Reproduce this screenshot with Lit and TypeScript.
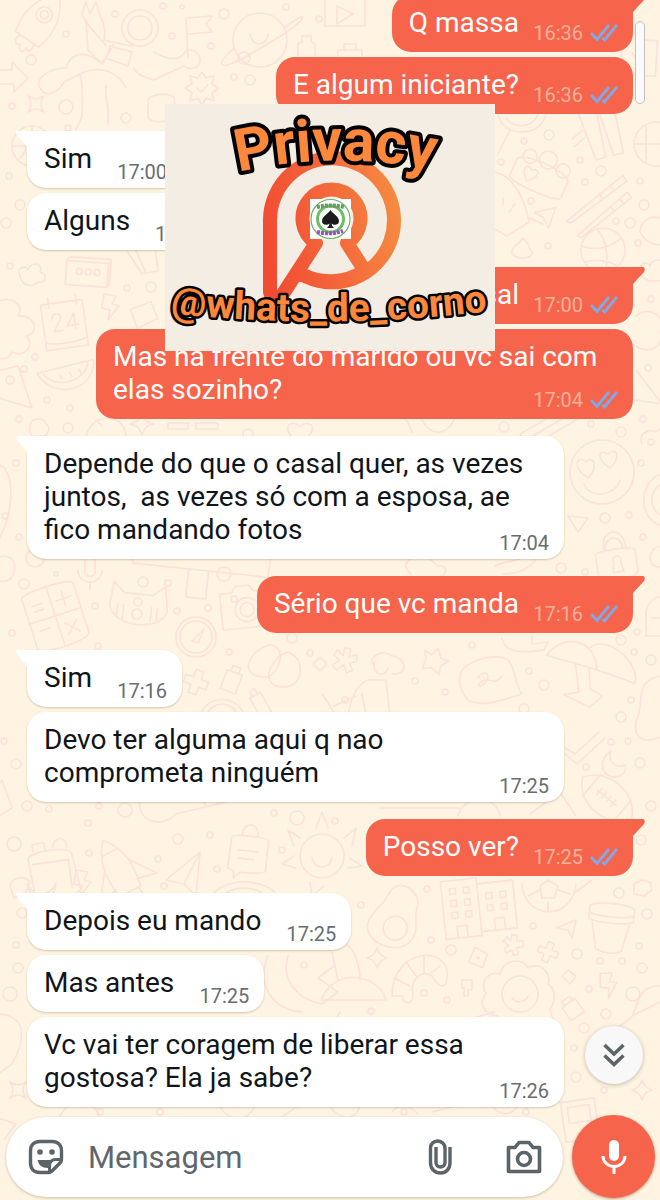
import { LitElement, html, svg, css } from "lit";
import { customElement, property } from "lit/decorators.js";

interface Message {
  text: string;
  time: string;
  mine?: boolean;
  first?: boolean;
}

const MESSAGES: Message[] = [
  { text: "Q massa", time: "16:36", mine: true, first: true },
  { text: "E algum iniciante?", time: "16:36", mine: true },
  { text: "Sim", time: "17:00", first: true },
  { text: "Alguns", time: "17:00" },
  { text: "Casal", time: "17:00", mine: true, first: true },
  { text: "Mas na frente do marido ou vc sai com elas sozinho?", time: "17:04", mine: true },
  {
    text: "Depende do que o casal quer, as vezes juntos,  as vezes só com a esposa, ae fico mandando fotos",
    time: "17:04",
    first: true,
  },
  { text: "Sério que vc manda", time: "17:16", mine: true, first: true },
  { text: "Sim", time: "17:16", first: true },
  { text: "Devo ter alguma aqui q nao comprometa ninguém", time: "17:25" },
  { text: "Posso ver?", time: "17:25", mine: true, first: true },
  { text: "Depois eu mando", time: "17:25", first: true },
  { text: "Mas antes", time: "17:25" },
  { text: "Vc vai ter coragem de liberar essa gostosa? Ela ja sabe?", time: "17:26" },
];

/* Line drawings scattered over the wallpaper: [x, y, rotation, path data]. */
const DOODLES: [number, number, number, string][] = [
  // rocket
  [42, 18, 35, "M-14 26C-20 4-16-14 0-30C16-14 20 4 14 26ZM-8-4a8 8 0 1 0 16 0a8 8 0 1 0-16 0M-4-4a4 4 0 1 0 8 0a4 4 0 1 0-8 0M-8 26C-12 34-6 38-3 34C0 42 5 40 4 33C9 37 11 32 8 26"],
  // astronaut
  [140, 28, 0, "M-18 0a18 18 0 1 0 36 0a18 18 0 1 0-36 0M-12 0a12 12 0 1 0 24 0a12 12 0 1 0-24 0M-34 18C-42 6-56-4-58-14L-54-26L-50-14L-44-26L-40-12C-36-6-34 2-36 12L-8 18M-54-8L-52 22L-38 36L-26 16M-30 18L-8 24L-12 38L-34 30ZM14 24C24 30 34 34 42 28C46 18 60 22 60 32C60 42 48 42 44 38L14 52C6 50-4 46-6 40M-38 36C-56 20-70 26-74 40C-92 40-106 52-100 60C-94 72-80 62-76 54L-60 46C-56 60-58 76-58 88L-64 102M-60 46C-40 36-22 44-14 60M-32 96C-30 76-36 70-34 58"],
  // flag
  [190, 38, 0, "M-2 20L-4-20L22-22L16-14L22-6L-3-4"],
  // planet
  [260, 40, 0, "M-27 0a27 27 0 1 0 54 0a27 27 0 1 0-54 0M-10-6C-8 8 8 6 8-6M24-12C50-32 48-22 24-6L-16 18C-44 32-44 24-26 8M-22 18a6 6 0 1 0 12 0a6 6 0 1 0-12 0"],
  // bottle
  [306, 48, 0, "M-8 14V-4L-4-6V-12H5V-6L9-4V14Z"],
  // seal
  [202, 88, 0, "M0-16L4-10L12-12L10-4L17 0L10 5L12 13L4 10L0 17L-4 10L-12 13L-10 5L-17 0L-10-4L-12-12L-4-10ZM-5 0L-1 4L6-3"],
  // arrow
  [10, 78, 0, "M-20-8H2V-16L18 0L4 14V6H-20"],
  [36, 104, 0, "M-8-8C-2-4 2-4 8-8C4-2 4 2 8 8C2 4-2 4-8 8C-4 2-4-2-8-8Z"],
  [162, 108, 0, "M-14-8C-12-14 8-16 12-10L14 8C10 14-8 16-14 10Z"],
  [32, 146, 0, "M-20 0a20 20 0 1 0 40 0a20 20 0 1 0-40 0M-20 0H20M0-20V20M-14-14C-4-6-4 6-14 14M14-14C4-6 4 6 14 14"],
  [345, 16, 0, "M-20-30V10H20V-30M-8-10L8-2L-8 8Z"],
  [350, 58, 0, "M-12-8H12V10H-12ZM-6-8V-14H6V-8"],
  [640, 60, 20, "M-24-14L10-24L20 10L-14 20ZM-10-4L6 6"],
  // left column
  [32, 276, 0, "M-12 0C-16-8-6-12-4-6C0-16 12-12 8-4C16-2 14 8 6 6C0 12-10 10-12 0Z"],
  [88, 274, 4, "M-22-12L-20-16H22V8L20 12H-22ZM-22-12H20V12M-12-2a3 3 0 1 0 6 0a3 3 0 1 0-6 0M-3-2a3 3 0 1 0 6 0a3 3 0 1 0-6 0M6-2a3 3 0 1 0 6 0a3 3 0 1 0-6 0"],
  [65, 322, -8, "M-22-20H20V18C8 22-14 22-22 18ZM-22 18V26H20V18M-14-26V-16M14-26V-16M-13-4C-11-12-3-10-4-4L-12 8H-3M10 8V-8L2 4H13"],
  [110, 306, 0, "M-6-12L6-10L2-2L9 0L-2 14L0 4L-8 2Z"],
  [144, 314, -15, "M-12-8L10-10L12 8L-10 12Z"],
  [140, 262, -10, "M-14-20L0 12H16L18-20M-4-20L4 12"],
  [14, 340, 0, "M-20-36C-4-48 12-34 4-24C22-26 26-6 12-4C22 6 10 18-2 12C-6 22-20 20-22 12"],
  [68, 374, -14, "M-30-8H28C24 22-20 24-30-8ZM-24-6C-16 12 14 12 22-6M-8-1L-7 3M2-1L3 3M12-2L13 2"],
  [14, 388, 0, "M-22-16L4-22L18 20L-22 8M-8-8a4 4 0 1 0 8 0a4 4 0 1 0-8 0"],
  [40, 430, 0, "M-10-4C-10-12 4-14 6-6C12-4 8 8 0 6C-6 10-12 4-10-4Z"],
  [142, 424, 0, "M-12 0C-4-2-2-4 0-12C2-4 4-2 12 0C4 2 2 4 0 12C-2 4-4 2-12 0Z"],
  [192, 426, 0, "M-24-3H-4V3H-24ZM4-3H26V3H4Z"],
  [300, 430, 0, "M0 14C-20 0-12-12 0-4C12-12 20 0 0 14Z"],
  [4, 500, 0, "M-6-36C14-30 8 20-6 40"],
  [10, 570, 0, "M-16-10C-8-18 8-14 4 2C2 12-8 14-16 8"],
  // calculator
  [55, 618, -18, "M-26-28C-26-34 26-34 28-28V24C26 32-24 32-26 24ZM-27-2H28M1-33V30M-18-18H-8M-18-12H-8M14-24V-8M6-16H22M8 8L20 20M20 8L8 20M-18 8H-8"],
  [90, 570, 0, "M-5-10C-5-16 5-16 5-10V2C5 8-5 8-5 2ZM-12 0C-12 16 12 16 12 0M0 12V20"],
  // cat
  [137, 612, 6, "M-28-4L-26-28L-14-18H14L26-28L30-4C26 18-22 18-28-4ZM-20-6V6M-14-6V8M14-6V8M20-6V6M-4-10a4 4 0 1 0 8 0a4 4 0 1 0-8 0M-5 2a5 5 0 1 0 10 0a5 5 0 1 0-10 0"],
  [196, 637, 0, "M-20 0a20 20 0 1 0 40 0a20 20 0 1 0-40 0M-16 0a16 16 0 1 0 32 0a16 16 0 1 0-32 0M-4 4L8-8L2 6Z"],
  [243, 608, -6, "M-22-16H-10L-6-22H8L12-16H28V20H-22ZM-8 2a12 12 0 1 0 24 0a12 12 0 1 0-24 0M-3 2a7 7 0 1 0 14 0a7 7 0 1 0-14 0"],
  [198, 576, 6, "M-70-26L-66-6H10V22H-10V-6M10-6H70V-26"],
  [275, 665, 12, "M-26 4C-24-12-8-22-4-18C8-16 6 12-8 14C-20 16-26 12-26 4ZM-4 4C0-10 10-18 14-14C26-12 32 10 18 18C4 24-6 18-4 4Z"],
  [196, 682, 20, "M-4-12H4V-4H12V4H4V12H-4V4H-12V-4H-4Z"],
  [232, 680, 20, "M-8-8H8V12H-8ZM-4-8V-14H4V-8"],
  [260, 704, -30, "M-6-10H6V14H-6ZM-3-10V-16H3V-10"],
  [320, 664, 0, "M-7 0L0-7L7 0L0 7Z"],
  [222, 712, 0, "M-22 4C-16-18 16-18 22 4M-16 4C-10-12 10-12 16 4"],
  // bag, rocket, plane, chat lock, sun
  [52, 872, -8, "M-22-16C-20-24 20-24 22-16L26 20C24 30-18 30-20 20ZM-18-10H18V18M-16-22V-30H-4V-22M4-24C6-36 20-34 18-22M-26 8C-22 24-4 24 2 12C0 30-26 30-26 8Z"],
  [120, 872, -28, "M-12 22C-16-4-14-20 0-36C14-20 16-4 12 22ZM-9-22H9M13-8L32 18L12 14M-13-8L-32 18L-12 14M-9 22L-12 38L-4 32L0 42L4 32L12 38L9 22"],
  [188, 878, 0, "M-22 2L12-26L8 18L-4 6ZM-4 6L12-26"],
  [248, 855, 6, "M-18-16C-18-20 18-20 19-16V14C18 18-6 18-6 18L-12 24L-13 17L-19 15ZM-10-4H10M-10 4H6M-8-19C-8-34 8-34 8-19"],
  [322, 856, 0, "M-22 0a22 22 0 1 0 44 0a22 22 0 1 0-44 0M-10 2C-8 14 8 14 10 2M-6-28L0-44L6-28M-22-18L-34-26L-28-10M-28 0L-40 8L-26 12M22-18L34-28L30-10M28 2L40 10L26 12M-12 26L-10 40L2 30"],
  [160, 806, 0, "M-20-6C-24 14 0 24 16 8L90-10V-18M40-16L46 2"],
  [82, 882, 0, "M-6-12L6-10L2-2L9 0L-2 14L0 4L-8 2Z"],
  [6, 806, 0, "M-14-10L-4-26L6 2L-14 14"],
  [22, 886, 0, "M-12 0C-10-10 4-10 8-4L4 6L-8 12Z"],
  [244, 896, 0, "M-34 4C-26-20 26-20 36 4M-24 4C-16-12 16-12 24 4"],
  [308, 984, 0, "M-40-28C-52 0-36 26-6 28M-20-28C-26-8-16 14 14 20L30 8L10-6L26-18"],
  [8, 1040, 0, "M-10-26C26-24 12 10 4 24L-10 34"],
  [18, 1090, 0, "M-8-8C-2-4 2-4 8-8C4-2 4 2 8 8C2 4-2 4-8 8C-4 2-4-2-8-8Z"],
  // right column
  [520, 118, 0, "M-22-4C-18 20 22 20 26-4M-14 0C-8 10 12 12 18-4M-10 12L-22 36"],
  [600, 134, -14, "M-16-24L-10 24H0L2-24M4-24L8 24H18L20-24M-28-2L-16-8M-28 6L-16 0"],
  [656, 144, 0, "M-22 0a22 22 0 1 0 44 0a22 22 0 1 0-44 0M-10-18V18M-22 0H22"],
  [540, 176, 24, "M-28-6C-26-16 24-16 28-6V12C24 18-24 18-28 12ZM-24-14a7 7 0 1 0 14 0a7 7 0 1 0-14 0M-8-18a9 9 0 1 0 18 0a9 9 0 1 0-18 0M12-14a7 7 0 1 0 14 0a7 7 0 1 0-14 0M-10 10C-22 0-16-8-10-2C-4-8 2 0-10 10Z"],
  [600, 202, -36, "M-38-4L34-8V-1L-36 0ZM-38 14L28 8V15L-36 18ZM4-7V-1M18-7V-1M6 10V16M18 9V15"],
  [505, 208, 0, "M-14-36C8-36 20-8 24 14L2 28L-12 20M24 10L38 16M4 4L10-4M-2-10V-4"],
  [545, 214, 20, "M-10 2L8-10V12L0 4Z"],
  [522, 250, 0, "M-10 2C-10-6-2-4 0-12C8-8 6-2 10 2C12 10-10 10-10 2Z"],
  [603, 250, 0, "M-22 0a22 22 0 1 0 44 0a22 22 0 1 0-44 0M-21-4C-6 2 10-4 18-12M-6-21C4-10 6 8 2 22M-18 12C-6 8 8 12 14 16"],
  [656, 232, 0, "M-16 0C-16-14 0-18 10-12M-16 0C-10 12 0 14 10 12"],
  [654, 272, 0, "M-14 0C-16-8-6-12-4-6C0-16 12-12 12-4M-14 0C-12 10 0 10 8 8"],
  [642, 336, 0, "M-6-20C8-32 26-18 18-4C24 8 8 20-6 10"],
  [642, 394, 0, "M-6-24L20 10L-6 6"],
  [550, 426, -30, "M-30-8H34V8H-30ZM-30 0H34"],
  [440, 424, 0, "M-20-10C-14 14 10 14 16-10M-60-6C-50-16-34-12-28 8"],
  [602, 472, 0, "M-32 0a32 32 0 1 0 64 0a32 32 0 1 0-64 0M-18 12C-12 28 14 24 18 8M-14 6C-32-6-24-18-16-10C-10-18-2-6-14 6ZM8-4C-8-14-2-24 6-18C14-26 20-14 8-4Z"],
  [655, 500, 0, "M14-28C-20-24-18 24 10 26M14-18C-8-16-8 14 10 16"],
  [652, 440, 0, "M-10 4C-14-6-4-12 4-8L14-16M-4 2a3 3 0 1 0 6 0a3 3 0 1 0-6 0"],
  [576, 522, 0, "M-8-6L12-4L2 10Z"],
  [617, 564, -8, "M-20-12C-18-16 18-16 20-12V10C16 18-18 18-20 10ZM-11-15C-13-38 12-38 11-15M-10-15C-9-30 8-30 8-15M-3-2a4 4 0 1 1 7 0L6 8H-5Z"],
  [656, 556, 0, "M4-10C-12-6-6 16 6 10"],
  [656, 616, 0, "M-10-4C-8-18 4-20 10-20M-10-4V20H10M-4 2H10"],
  [425, 566, 0, "M-20 0C-14-16 8-8 12 0C24-2 24 10 10 12H-12ZM70 0C80-6 100-4 110-16M78 8C90 8 104 4 112-8"],
  [372, 672, 0, "M0-8C-2-18 12-22 20-16C36-14 36 4 20 2M2-10C0 4 14 6 16-4M-4 8C-16 12-22 30-24 44M-4 8H14L18 44M-10 22L-6 44M-50 22L-38 40M-16 24L-38 34"],
  [345, 660, 15, "M-3-12H3V-4L10-8L12-2L5 2L10 8L5 12L0 5L-6 12L-11 8L-5 2L-12-2L-10-8L-3-4Z"],
  [434, 660, 20, "M-12-6L-4-4L0-12L6-4L14-4L8 4L10 12L0 8L-8 12L-8 2Z"],
  [488, 680, 0, "M-28-4C-26-20 10-28 20-20C28-12 26 4 34 14C14 20-6 28-20 20C-26 14-30 4-28-4ZM-10-2C-6-10 4-8-2 2C-10 10-12 4-4 0C4-2 6 6 14-4"],
  [528, 640, 0, "M-26-2C-22 16 0 12 16 10L20 2L4 4V-4"],
  [590, 664, 14, "M-44 2C-34-24 0-26 8 4ZM-4-16C10-34 50-12 48 8L8 4M-14 4L-4 30L-18 36L10 42L20 28L6 24L0 4"],
  [652, 716, 0, "M10-40C-20-36-6-14-16 6C-20 28 0 26 10 20"],
  [585, 756, 0, "M-20-8L-10-2L14-24M-20-2L-8 8L20-18"],
  [613, 763, 0, "M-2-12C-16-4-12 16 4 14C10 12 14 8 12 2C2 6-6-2-2-12Z"],
  [607, 798, 40, "M-32 0C-20-24 20-24 32 0C20 24-20 24-32 0ZM-12 0H12M-10-4V4M-4-4V4M2-4V4M8-4V4M-20-14V14M20-14V14"],
  [480, 806, 0, "M-22 10C-16-12 16-12 20 10M50 8L80-14L96 10M-100 2H-20"],
  [477, 906, -6, "M-34-28H2V30H-34ZM2-22H38V26H2ZM-26-20H-20V-14H-26ZM-12-20H-6V-14H-12ZM-26-8H-20V-2H-26ZM-12-8H-6V-2H-12ZM-26 4H-20V10H-26ZM-12 4H-6V10H-12ZM-22 30V18H-12V30M10-12H16V-6H10ZM24-12H30V-6H24ZM10 0H16V6H10ZM24 0H30V6H24ZM16 26V14H26V26"],
  [548, 888, 0, "M-26-4C-24 32 24 34 28-4M-8-2L0-8L10-2L6 10H-6ZM-8 2L-20 8M10 2L22 6M0 14V24M28 4L44-8"],
  [395, 918, 10, "M-8-28C0-40 22-30 20-14C18 0 28 8 18 22C6 36-26 30-26 10C-24-2-18-6-14-14ZM-10 10a12 12 0 1 0 24 0a12 12 0 1 0-24 0"],
  [610, 926, 6, "M-22-18C-20-24 20-24 23-18V-6C18-2-18-2-22-6ZM-18-2L-12 24C-4 28 8 28 14 24L19-2M-22-12C-14-8 14-8 23-12"],
  [642, 888, 0, "M-8-4L0-8L8-6L10 2L2 8L-8 6Z"],
  [566, 928, 0, "M-10 0L10-8L6 10L2 2Z"],
  [513, 945, 10, "M-3-10H3V-4L9-6L10 0L4 2L7 8L2 10L0 5L-5 9L-8 5L-4 1L-10-2L-7-7L-3-4Z"],
  [548, 952, 20, "M-3-10H3V-3H10V3H3V10H-3V3H-10V-3H-3Z"],
  [478, 958, 30, "M-8-8H6L9 6L-6 8ZM-1 0a1 1 0 1 0 2 0a1 1 0 1 0-2 0"],
  [377, 958, 0, "M-10 0C-4-2-2-4 0-10C2-4 4-2 10 0C4 2 2 4 0 10C-2 4-4 2-10 0Z"],
  [418, 984, 0, "M-26 12C-26-40 40-40 28 0C22 6 16-4 14-8C6-14-4-8-6 4C-2 22-14 22-16 12ZM-24-6L-8 2M-12-22L-2-8M6-28V-12M22-18L12-10"],
  [520, 992, 0, "M-22 24C-40 22-40 8-34 2C-42-12-28-22-20-18C-16-34 4-34 8-24C22-32 32-16 28-8C40 0 32 14 30 18L34 30M-18 2a18 18 0 1 0 36 0a18 18 0 1 0-36 0M-8 6C-4 12 6 10 8 4M-60 30L-26 20"],
  [352, 988, 0, "M-30 12C-22-18 24-18 34 12ZM-14-8L-20-36M8-8C8-22 2-40-6-44M-12 24L-18 34"],
  [568, 976, 0, "M-6 0L0-6L8 0L2 8Z"],
  [608, 984, -10, "M-6-12L6-10L2-2L9 0L-2 14L0 4L-8 2Z"],
  [572, 1008, -35, "M-8-6H8V10H-8ZM-5-6V-11H5V-6"],
  [466, 986, 0, "M-4-6H6V4H2V10H-2V2H-4Z"],
  [640, 1010, 0, "M20-24C-4-24 0-6-8 6C-16 16-28 20-36 20M-8 6L20-8"],
  [642, 1090, 0, "M-10 0C-4-2-2-4 0-10C2-4 4-2 10 0C4 2 2 4 0 10C-2 4-4 2-10 0Z"],
  [580, 1112, -8, "M-18-12H16V28H-18ZM-12-6H10V10H-12Z"],
  [452, 1108, 0, "M-20 4L10-4M-60 4C-50-8-40 0-34 6M40-2C50 10 60 6 66-2"],
  [240, 1110, 0, "M-22-8C-14 14 10 14 16-8M40 8L70-12M90-4C100 12 116 10 120-4M-180 6C-170-12-150-12-140 6"],
  [8, 1126, 0, "M-10-8L8-2L-4 14"],
  [120, 424, 0, "M-34 22C-38-10 4-16 6 12M-24-4L-18 2"],
];

const DOTS: [number, number, number][] = [
  [66, 34, 3], [115, 14, 3], [163, 6, 3], [182, 7, 2], [172, 36, 3], [211, 46, 3], [224, 14, 5], [286, 7, 3],
  [31, 60, 5], [12, 106, 3], [66, 107, 7], [126, 118, 5], [68, 128, 3], [234, 77, 3], [250, 80, 5], [319, 19, 3],
  [20, 205, 5], [6, 223, 5], [9, 176, 3], [10, 266, 3], [127, 288, 3], [151, 287, 5], [35, 357, 3], [24, 369, 3],
  [47, 400, 3], [70, 408, 3], [68, 428, 5], [19, 419, 3], [248, 434, 5], [16, 463, 3], [5, 516, 3], [19, 537, 3],
  [35, 558, 9], [24, 584, 5], [56, 574, 2], [143, 582, 5], [168, 583, 3], [224, 574, 7], [95, 606, 3], [177, 611, 3],
  [208, 608, 3], [234, 599, 3], [12, 633, 3], [98, 646, 3], [229, 652, 3], [292, 638, 5], [310, 653, 3], [16, 764, 5],
  [4, 741, 3], [27, 806, 5], [49, 809, 3], [99, 806, 3], [125, 810, 7], [14, 844, 7], [89, 853, 3], [88, 823, 3],
  [178, 839, 5], [210, 835, 3], [158, 859, 3], [217, 869, 3], [274, 813, 3], [297, 818, 7], [282, 850, 3], [164, 886, 3],
  [16, 945, 3], [18, 968, 5], [10, 994, 7], [22, 913, 5], [304, 965, 3], [518, 90, 3], [549, 135, 5], [524, 141, 3],
  [501, 162, 3], [580, 160, 3], [601, 171, 5], [585, 182, 3], [640, 181, 3], [644, 205, 5], [616, 221, 3], [630, 223, 5],
  [638, 243, 3], [531, 201, 3], [548, 246, 3], [651, 299, 3], [648, 368, 3], [621, 432, 5], [643, 419, 3], [504, 427, 5],
  [591, 424, 3], [641, 463, 3], [605, 518, 5], [629, 515, 3], [643, 537, 3], [561, 568, 5], [585, 572, 3], [621, 640, 5],
  [637, 632, 3], [634, 652, 3], [651, 660, 5], [472, 645, 3], [415, 681, 3], [445, 692, 3], [529, 671, 3], [544, 685, 5],
  [524, 709, 5], [631, 700, 3], [621, 717, 5], [611, 742, 3], [628, 741, 3], [640, 763, 5], [586, 767, 3], [651, 806, 5],
  [641, 840, 5], [335, 821, 3], [427, 889, 3], [361, 905, 3], [619, 893, 5], [533, 926, 3], [647, 914, 5], [431, 940, 3],
  [451, 950, 5], [577, 954, 5], [600, 961, 3], [622, 961, 3], [639, 946, 3], [642, 968, 5], [589, 989, 3], [633, 994, 7],
  [447, 1000, 3], [424, 993, 3], [371, 1011, 3], [606, 1014, 5], [584, 1028, 5], [574, 1048, 3], [576, 1077, 5], [604, 1090, 3],
  [526, 1112, 3], [404, 1112, 3], [160, 1112, 3], [286, 446, 3], [345, 700, 3], [100, 1112, 3],
];

@customElement("chat-wallpaper")
class ChatWallpaper extends LitElement {
  static styles = css`
    :host {
      display: block;
      background: #fef4e1;
    }
    svg {
      display: block;
      width: 100%;
      height: 100%;
      fill: none;
      stroke: #fbe1d9;
      stroke-width: 1.6;
      stroke-linecap: round;
      stroke-linejoin: round;
    }
  `;

  render() {
    return html`<svg viewBox="0 0 660 1200" preserveAspectRatio="xMidYMid slice" aria-hidden="true">
      ${DOODLES.map(([x, y, r, d]) => svg`<path d=${d} transform="translate(${x} ${y}) rotate(${r})" />`)}
      ${DOTS.map(([x, y, r]) => svg`<circle cx=${x} cy=${y} r=${r} />`)}
    </svg>`;
  }
}

@customElement("chat-bubble")
class ChatBubble extends LitElement {
  @property({ attribute: false }) message!: Message;

  static styles = css`
    :host {
      display: flex;
    }
    .bubble {
      position: relative;
      display: grid;
      box-sizing: border-box;
      max-width: calc(100% - 69px);
      padding: 11px 15px 5px 17px;
      border-radius: 19px;
      background: #fff;
      color: #10151a;
      box-shadow: 0 1px 2px rgba(120, 90, 60, 0.3);
    }
    .mine {
      margin-left: auto;
      background: #f6644b;
      color: #fff;
      box-shadow: 0 0 2px #fff;
    }
    .first {
      border-top-left-radius: 0;
    }
    .mine.first {
      border-top-left-radius: 19px;
      border-top-right-radius: 0;
    }
    .text {
      grid-area: 1 / 1;
      margin: 0;
      padding: 0 16px 8px 0;
      font-size: 28px;
      line-height: 33px;
      white-space: pre-wrap;
    }
    .room {
      display: inline-block;
      width: 59px;
      height: 1px;
    }
    .mine .room {
      width: 83px;
    }
    .meta {
      grid-area: 1 / 1;
      place-self: end;
      display: flex;
      align-items: center;
      gap: 7px;
      height: 22px;
      color: #686d72;
      font-size: 20px;
      line-height: 22px;
    }
    .mine .meta {
      margin-bottom: 3px;
      color: #fcb09c;
    }
    .ticks {
      width: 28px;
      height: 18px;
      fill: none;
      stroke: #81a9e8;
      stroke-width: 2.8;
    }
    .tail {
      position: absolute;
      top: 0;
      left: -12px;
      width: 13px;
      height: 18px;
      fill: #fff;
    }
    .mine .tail {
      left: auto;
      right: -12px;
      fill: #f6644b;
    }
  `;

  render() {
    const { text, time, mine, first } = this.message;
    return html`<div class="bubble ${mine ? "mine" : ""} ${first ? "first" : ""}">
      ${first
        ? html`<svg class="tail" viewBox="0 0 13 18" aria-hidden="true">
            ${mine
              ? svg`<path d="M0 0H11Q14 1 12 5L1 17V18H0Z" />`
              : svg`<path d="M13 0H1Q0 0 1 2Q3 6 8 11Q12 15 12 18H13Z" />`}
          </svg>`
        : null}
      <p class="text">${text}<span class="room"></span></p>
      <span class="meta"
        ><time>${time}</time>${mine
          ? html`<svg class="ticks" viewBox="0 0 28 18" role="img" aria-label="Lida">
              <path d="M1 9L7 15.500L19 1M12.500 14L14.500 16L27 1" />
            </svg>`
          : null}</span
      >
    </div>`;
  }
}

@customElement("creator-badge")
class CreatorBadge extends LitElement {
  static styles = css`
    :host {
      display: block;
    }
    svg {
      display: block;
      width: 100%;
      background: #f4ede3;
      font-family: Roboto, sans-serif;
      font-weight: 700;
    }
    .outlined {
      fill: #fd873b;
      stroke: #000;
      stroke-linejoin: round;
      paint-order: stroke;
    }
    .title {
      font-size: 59px;
      stroke-width: 8px;
    }
    .handle {
      font-size: 39px;
      stroke-width: 5px;
    }
  `;

  render() {
    return html`<svg viewBox="0 0 330 247">
      <defs>
        <linearGradient id="flame" gradientUnits="userSpaceOnUse" x1="98" y1="130" x2="236" y2="105">
          <stop offset="0" stop-color="#f14b34" />
          <stop offset="0.5" stop-color="#f4683a" />
          <stop offset="1" stop-color="#f58b41" />
        </linearGradient>
        <path id="arch" d="M66 70Q169 44 276 68" />
        <path id="smile" d="M2 209Q165 227 326 207" />
      </defs>
      <g fill="none" stroke="url(#flame)" stroke-width="14" stroke-linecap="round" stroke-linejoin="round">
        <path d="M136 170A62 62 0 1 0 105 116V188Q106 195 116 193L151 139A29 29 0 1 1 182 139L198 164M136 170A62 62 0 0 0 198 168" />
      </g>
      <g>
        <rect x="145" y="95" width="41" height="40" fill="#fff" />
        <circle cx="165.500" cy="115" r="19.500" fill="#fff" stroke="#62b565" stroke-width="1.200" />
        <circle cx="165.500" cy="115" r="13" fill="#fff" stroke="#6dbd62" stroke-width="3" />
        <path
          fill="#1b1b1d"
          d="M165.500 106C168 110 174 112.500 174 117C174 121 169 122 166.500 119.500Q167 123 169 124H162Q164 123 164.500 119.500C162 122 157 121 157 117C157 112.500 163 110 165.500 106Z"
        />
        <path fill="none" stroke="#6b9368" stroke-width="4" stroke-dasharray="3 1" d="M152 103Q165 100 180 103" />
        <path fill="none" stroke="#a04bd0" stroke-width="4" stroke-dasharray="3 1" d="M152 128Q165 131 178 127" />
      </g>
      <text class="outlined title" text-anchor="middle"><textPath href="#arch" startOffset="50%">Privacy</textPath></text>
      <text class="outlined handle" text-anchor="middle"
        ><textPath href="#smile" startOffset="50%">@whats_de_corno</textPath></text
      >
    </svg>`;
  }
}

@customElement("app-root")
class AppRoot extends LitElement {
  static styles = css`
    :host {
      position: relative;
      display: flex;
      flex-direction: column;
      height: 100vh;
      overflow: hidden;
      font-family: Roboto, sans-serif;
    }
    .wallpaper {
      position: absolute;
      inset: 0;
    }
    .history {
      position: relative;
      flex: 1;
      min-height: 0;
      display: flex;
      flex-direction: column;
      justify-content: flex-end;
      gap: 5px;
      padding: 0 27px 8px;
      overflow: hidden;
    }
    .turn {
      margin-top: 12px;
    }
    .badge {
      position: absolute;
      top: 104px;
      left: 25%;
      width: 50%;
    }
    .scrollbar {
      position: absolute;
      top: 21px;
      right: 15px;
      box-sizing: border-box;
      width: 10px;
      height: 83px;
      border: 1px solid #c4bfc0;
      border-radius: 5px;
      background: #fbfafc;
    }
    button {
      display: grid;
      place-items: center;
      margin: 0;
      padding: 0;
      border: 0;
      background: none;
      color: #5b6469;
    }
    .jump {
      position: absolute;
      right: 17px;
      bottom: 116px;
      width: 58px;
      height: 58px;
      border-radius: 50%;
      background: #f8f8f9;
      box-shadow: 0 1px 4px rgba(60, 50, 40, 0.3);
    }
    .composer {
      position: relative;
      display: flex;
      align-items: center;
      gap: 9px;
      padding: 0 5px 2px 6px;
    }
    .field {
      flex: 1;
      min-width: 0;
      display: flex;
      align-items: center;
      box-sizing: border-box;
      height: 80px;
      padding: 0 15px 0 16px;
      border-radius: 40px;
      background: #fff;
      box-shadow: 0 1px 3px rgba(120, 90, 60, 0.35);
    }
    .field input {
      flex: 1;
      min-width: 0;
      margin-left: 18px;
      padding: 2px 0 0;
      border: 0;
      outline: 0;
      background: none;
      color: #10151a;
      font: 31px / 40px Roboto, sans-serif;
    }
    .field input::placeholder {
      color: #5f676c;
      opacity: 1;
    }
    .tool {
      width: 48px;
      height: 48px;
    }
    .tools {
      display: flex;
      gap: 36px;
    }
    .mic {
      width: 83px;
      height: 83px;
      border-radius: 50%;
      background: #f6644b;
      color: #fff;
      box-shadow: 0 1px 3px rgba(120, 60, 40, 0.5);
    }
    .line {
      fill: none;
      stroke: currentColor;
    }
  `;

  render() {
    return html`
      <chat-wallpaper class="wallpaper"></chat-wallpaper>
      <main class="history">
        ${MESSAGES.map((m) => html`<chat-bubble class=${m.first ? "turn" : ""} .message=${m}></chat-bubble>`)}
      </main>
      <div class="scrollbar"></div>
      <creator-badge class="badge"></creator-badge>
      <button class="jump" aria-label="Ir para o fim">
        <svg class="line" width="22" height="24" viewBox="0 0 22 24" stroke-width="3.500">
          <path d="M1.500 2L11 11L20.500 2M1.500 12.500L11 21.500L20.500 12.500" />
        </svg>
      </button>
      <form class="composer" @submit=${(e: Event) => e.preventDefault()}>
        <div class="field">
          <button class="tool" type="button" aria-label="Figurinhas">
            <svg width="36" height="36" viewBox="0 0 36 36">
              <path
                class="line"
                stroke-width="3.400"
                stroke-linejoin="round"
                d="M12 2.500H24C30 2.500 33.500 6 33.500 12V20C33.500 22 33 23 32 24L24 32C23 33 22 33.500 20 33.500H12C6 33.500 2.500 30 2.500 24V12C2.500 6 6 2.500 12 2.500Z"
              />
              <circle cx="12" cy="13" r="2.800" fill="currentColor" />
              <circle cx="24" cy="13" r="2.800" fill="currentColor" />
              <path fill="currentColor" d="M9.500 21H24C21 23 20 25 20 29C14 29 10.500 26 9.500 21Z" />
              <path class="line" stroke-width="3" d="M33 20.500H28C23.500 20.500 21.500 23 21.500 27V33" />
            </svg>
          </button>
          <input type="text" placeholder="Mensagem" aria-label="Mensagem" />
          <div class="tools">
            <button class="tool" type="button" aria-label="Anexar">
              <svg class="line" width="24" height="36" viewBox="0 0 24 36" stroke-width="3.400">
                <path d="M22 8V24C22 30 18 34 12.500 34C7 34 2.500 30 2.500 24V9C2.500 5 5.500 2 9.500 2C13.500 2 17 5 17 9V23.500C17 26 15 28 12.500 28C10 28 8 26 8 23.500V8" />
              </svg>
            </button>
            <button class="tool" type="button" aria-label="Câmera">
              <svg class="line" width="36" height="34" viewBox="0 0 36 34" stroke-width="3.600" stroke-linejoin="round">
                <path d="M2.500 7.500H9L13 2.500H23L27 7.500H33.500V31.500H2.500Z" />
                <circle cx="18" cy="19" r="6.500" />
              </svg>
            </button>
          </div>
        </div>
        <button class="mic" type="button" aria-label="Gravar áudio">
          <svg width="26" height="36" viewBox="0 0 26 36">
            <rect x="8" y="1" width="10" height="21" rx="5" fill="currentColor" />
            <path class="line" stroke-width="3" d="M2 17C2 23 7 27.500 13 27.500C19 27.500 24 23 24 17M13 27V35" />
          </svg>
        </button>
      </form>
    `;
  }
}
